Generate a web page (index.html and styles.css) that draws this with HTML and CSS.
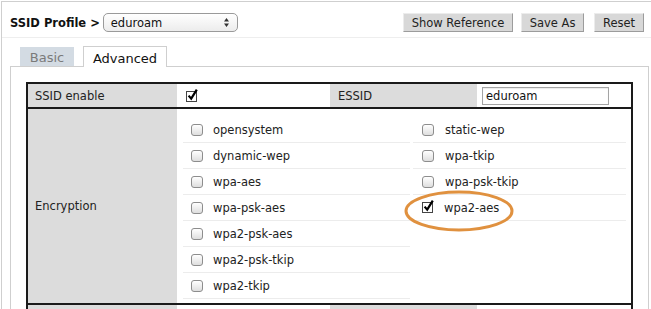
FILE: index.html
```html
<!DOCTYPE html>
<html>
<head>
<meta charset="utf-8">
<link rel="stylesheet" href="styles.css">
</head>
<body>
<div class="frame">
  <header class="topbar">
    <div class="profile">
      <span class="crumb">SSID Profile &gt;</span>
      <div class="select">
        <span>eduroam</span>
        <svg class="arrows" width="7" height="11" viewBox="0 0 7 11"><path d="M3.5 1 L6 4.5 L1 4.5 Z M3.5 10 L6 6.5 L1 6.5 Z" fill="#333"/></svg>
      </div>
    </div>
    <div class="actions">
      <button class="btn b-ref">Show Reference</button>
      <button class="btn b-save">Save As</button>
      <button class="btn b-reset">Reset</button>
    </div>
  </header>
  <nav class="tabs">
    <span class="tab">Basic</span>
    <span class="tab active">Advanced</span>
  </nav>
  <section class="panel">
    <table class="grid">
      <colgroup><col class="c1"><col class="c2"><col class="c3"><col class="c4"></colgroup>
      <tr class="r1">
        <th>SSID enable</th>
        <td><svg class="cb-on" width="14" height="14" viewBox="0 0 14 14"><rect x="1.5" y="3.5" width="10" height="10" fill="#fff" stroke="#444"/><path d="M3.6 7.6 L6.2 10.6 L11.8 1.6" fill="none" stroke="#000" stroke-width="2.2"/></svg></td>
        <th>ESSID</th>
        <td><div class="text-input">eduroam</div></td>
      </tr>
      <tr class="r2">
        <th>Encryption</th>
        <td colspan="3">
          <div class="opts">
            <div class="col">
              <div class="opt"><span class="cb"></span>opensystem</div>
              <div class="opt"><span class="cb"></span>dynamic-wep</div>
              <div class="opt"><span class="cb"></span>wpa-aes</div>
              <div class="opt"><span class="cb"></span>wpa-psk-aes</div>
              <div class="opt"><span class="cb"></span>wpa2-psk-aes</div>
              <div class="opt"><span class="cb"></span>wpa2-psk-tkip</div>
              <div class="opt"><span class="cb"></span>wpa2-tkip</div>
            </div>
            <div class="col">
              <div class="opt"><span class="cb"></span>static-wep</div>
              <div class="opt"><span class="cb"></span>wpa-tkip</div>
              <div class="opt"><span class="cb"></span>wpa-psk-tkip</div>
              <div class="opt"><svg class="cb-on" width="14" height="14" viewBox="0 0 14 14"><rect x="1.5" y="3.5" width="10" height="10" fill="#fff" stroke="#444"/><path d="M3.6 7.6 L6.2 10.6 L11.8 1.6" fill="none" stroke="#000" stroke-width="2.2"/></svg>wpa2-aes</div>
            </div>
          </div>
        </td>
      </tr>
      <tr class="r3">
        <th></th><td></td><th></th><td></td>
      </tr>
    </table>
  </section>
</div>
<svg class="highlight" width="116" height="46" viewBox="0 0 116 46"><ellipse cx="58" cy="23" rx="53" ry="19" fill="none" stroke="#e0913f" stroke-width="3"/></svg>
</body>
</html>
```
FILE: styles.css
```css
html, body {
  margin: 0;
  padding: 0;
  background: #fff;
  overflow: hidden;
}
body {
  font-family: "DejaVu Sans", Verdana, sans-serif;
  font-size: 11.5px;
  color: #222;
  width: 651px;
  height: 309px;
  position: relative;
}
.frame {
  margin: 1px 0 0 1px;
  border-top: 1px solid #cfcfcf;
  border-left: 1px solid #cfcfcf;
  height: 400px;
}
.topbar {
  border-bottom: 1px solid #eeeeee;
  display: flex;
  align-items: center;
  justify-content: space-between;
  padding: 6px 7px 0 8px;
  box-sizing: border-box;
  height: 36px;
}
.profile {
  display: flex;
  align-items: center;
  gap: 3px;
}
.crumb {
  font-weight: bold;
  color: #111;
}
.select {
  width: 135px;
  height: 19px;
  box-sizing: border-box;
  border: 1px solid #9a9a9a;
  border-radius: 5px;
  background: linear-gradient(#ffffff, #ececec);
  display: flex;
  align-items: center;
  justify-content: space-between;
  padding: 0 7px 0 7px;
  color: #111;
}
.arrows { display: block; }
.actions {
  display: flex;
  gap: 8px;
}
.btn {
  font-family: "DejaVu Sans", Verdana, sans-serif;
  font-size: 11.5px;
  color: #222;
  height: 19px;
  padding: 0;
  background: #d8d8d8;
  border: 1px solid;
  border-color: #ececec #9c9c9c #9c9c9c #ececec;
  margin: 0;
  line-height: 16px;
  text-align: center;
}
.b-ref { width: 110px; }
.b-save { width: 63px; }
.b-reset { width: 50px; margin-left: 2px; }
.tabs {
  display: flex;
  align-items: flex-end;
  gap: 9px;
  margin: 9px 0 0 18px;
  height: 19px;
}
.tab {
  font-size: 13px;
  height: 19px;
  box-sizing: border-box;
  display: flex;
  align-items: center;
  justify-content: center;
  padding-top: 2px;
}
.tab:first-child {
  width: 54px;
  background: #d3dbe3;
  color: #7a7a7a;
}
.tab.active {
  width: 84px;
  height: 21px;
  background: #fff;
  border: 1px solid #cfcfcf;
  border-bottom: none;
  color: #111;
  position: relative;
  z-index: 2;
  margin-bottom: -1px;
}
.panel {
  margin: 0 2px 0 8px;
  border: 1px solid #cfcfcf;
  padding: 15px 15px 0 15px;
  height: 300px;
}
.grid {
  width: 100%;
  border-collapse: collapse;
  border: 2px solid #1a1a1a;
  table-layout: fixed;
}
.c1 { width: 150px; }
.c2 { width: 153px; }
.c3 { width: 147px; }
.grid th, .grid td {
  border-bottom: 2px solid #1a1a1a;
  padding: 0;
  text-align: left;
  font-weight: normal;
  vertical-align: middle;
}
.grid th {
  background: #dcdcdc;
  color: #222;
  padding-left: 7px;
}
.grid th:nth-of-type(2) { padding-left: 8px; }
.r1 th, .r1 td { height: 23px; }
.r1 td:nth-of-type(1) { padding-left: 8px; }
.r1 td:nth-of-type(1) svg { display: block; margin-top: -2px; }
.r1 td:nth-of-type(2) { padding-left: 5px; }
.text-input {
  width: 127px;
  height: 18px;
  box-sizing: border-box;
  border: 1px solid #a4a4a4;
  box-shadow: inset 0 1px 1px rgba(0,0,0,0.08);
  padding: 1px 0 0 3px;
  line-height: 15px;
  color: #111;
}
.r2 td {
  padding: 8px 5px 4px 6px;
  vertical-align: top;
}
.opts {
  display: grid;
  grid-template-columns: 227px 1fr;
  column-gap: 3px;
}
.opt {
  height: 25px;
  border-bottom: 1px solid #ececec;
  display: flex;
  align-items: center;
  padding-left: 8px;
  color: #222;
}
.col:last-child .opt { padding-left: 9px; }
.cb {
  width: 12px;
  height: 12px;
  box-sizing: border-box;
  border: 1px solid #8d8d8d;
  border-radius: 3px;
  background: linear-gradient(#ffffff, #dedede);
  margin-right: 10px;
  flex: none;
}
.col:last-child .cb { margin-right: 11px; }
.opt .cb-on {
  flex: none;
  margin: -3px 9px 0 -1px;
}
.r3 th, .r3 td { height: 24px; border-bottom: none; }
.highlight {
  position: absolute;
  left: 401px;
  top: 188px;
}
```
